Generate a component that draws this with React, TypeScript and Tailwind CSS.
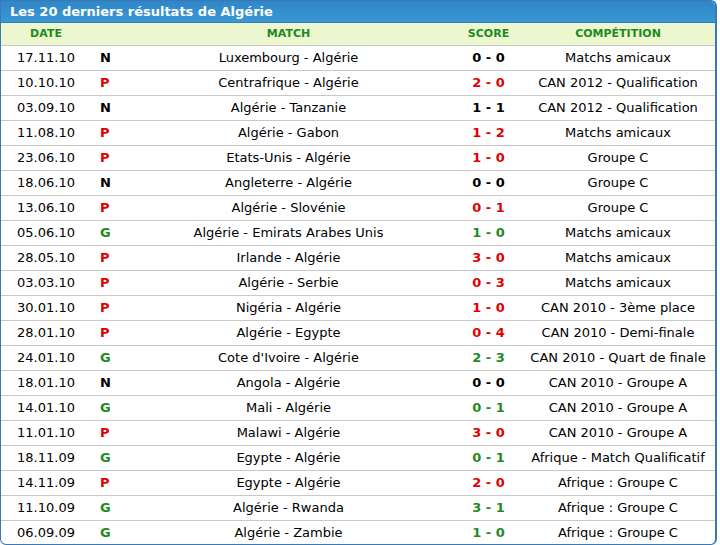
const results = [
  { date: '17.11.10', res: 'N', match: 'Luxembourg - Algérie', score: '0 - 0', comp: 'Matchs amicaux' },
  { date: '10.10.10', res: 'P', match: 'Centrafrique - Algérie', score: '2 - 0', comp: 'CAN 2012 - Qualification' },
  { date: '03.09.10', res: 'N', match: 'Algérie - Tanzanie', score: '1 - 1', comp: 'CAN 2012 - Qualification' },
  { date: '11.08.10', res: 'P', match: 'Algérie - Gabon', score: '1 - 2', comp: 'Matchs amicaux' },
  { date: '23.06.10', res: 'P', match: 'Etats-Unis - Algérie', score: '1 - 0', comp: 'Groupe C' },
  { date: '18.06.10', res: 'N', match: 'Angleterre - Algérie', score: '0 - 0', comp: 'Groupe C' },
  { date: '13.06.10', res: 'P', match: 'Algérie - Slovénie', score: '0 - 1', comp: 'Groupe C' },
  { date: '05.06.10', res: 'G', match: 'Algérie - Emirats Arabes Unis', score: '1 - 0', comp: 'Matchs amicaux' },
  { date: '28.05.10', res: 'P', match: 'Irlande - Algérie', score: '3 - 0', comp: 'Matchs amicaux' },
  { date: '03.03.10', res: 'P', match: 'Algérie - Serbie', score: '0 - 3', comp: 'Matchs amicaux' },
  { date: '30.01.10', res: 'P', match: 'Nigéria - Algérie', score: '1 - 0', comp: 'CAN 2010 - 3ème place' },
  { date: '28.01.10', res: 'P', match: 'Algérie - Egypte', score: '0 - 4', comp: 'CAN 2010 - Demi-finale' },
  { date: '24.01.10', res: 'G', match: "Cote d'Ivoire - Algérie", score: '2 - 3', comp: 'CAN 2010 - Quart de finale' },
  { date: '18.01.10', res: 'N', match: 'Angola - Algérie', score: '0 - 0', comp: 'CAN 2010 - Groupe A' },
  { date: '14.01.10', res: 'G', match: 'Mali - Algérie', score: '0 - 1', comp: 'CAN 2010 - Groupe A' },
  { date: '11.01.10', res: 'P', match: 'Malawi - Algérie', score: '3 - 0', comp: 'CAN 2010 - Groupe A' },
  { date: '18.11.09', res: 'G', match: 'Egypte - Algérie', score: '0 - 1', comp: 'Afrique - Match Qualificatif' },
  { date: '14.11.09', res: 'P', match: 'Egypte - Algérie', score: '2 - 0', comp: 'Afrique : Groupe C' },
  { date: '11.10.09', res: 'G', match: 'Algérie - Rwanda', score: '3 - 1', comp: 'Afrique : Groupe C' },
  { date: '06.09.09', res: 'G', match: 'Algérie - Zambie', score: '1 - 0', comp: 'Afrique : Groupe C' },
];

const resColor = (r: string) =>
  r === 'P' ? 'text-[#e00000]' : r === 'G' ? 'text-[#1f8a1f]' : 'text-black';

const cols = 'grid grid-cols-[99px_21px_335px_65px_1fr] items-center';

export default function App() {
  return (
    <div className="w-[720px] h-[545px] bg-white overflow-hidden" style={{ fontFamily: '"DejaVu Sans", Verdana, sans-serif' }}>
      <div className="w-[717px] border border-[#3b78b6] border-r-2 rounded-tr-[6px] rounded-b-[6px] overflow-hidden">
        <div className="h-[22px] bg-gradient-to-b from-[#2f86c8] to-[#3b98d4] border-b border-[#2f7fbf] pl-[9px] flex items-center text-white font-bold text-[13px]">
          Les 20 derniers résultats de Algérie
        </div>
        <div className={`${cols} h-[23px] bg-[#ecf6cf] border-b border-[#c9c9c9] text-[#1d8a1d] font-bold text-[11px] uppercase`}>
          <div className="text-center pr-[9px]">Date</div>
          <div />
          <div className="text-center">Match</div>
          <div className="text-center">Score</div>
          <div className="text-center">Compétition</div>
        </div>
        {results.map((r, i) => {
          const last = i === results.length - 1;
          return (
            <div
              key={i}
              className={`${cols} text-[13px] text-black ${last ? 'h-[23px]' : 'h-[25px] border-b border-[#c9c9c9]'}`}
            >
              <div className="text-center pr-[9px]">{r.date}</div>
              <div className={`font-bold ${resColor(r.res)}`}>{r.res}</div>
              <div className="text-center whitespace-nowrap">{r.match}</div>
              <div className={`text-center font-bold ${resColor(r.res)}`}>{r.score}</div>
              <div className="text-center whitespace-nowrap">{r.comp}</div>
            </div>
          );
        })}
      </div>
    </div>
  );
}
